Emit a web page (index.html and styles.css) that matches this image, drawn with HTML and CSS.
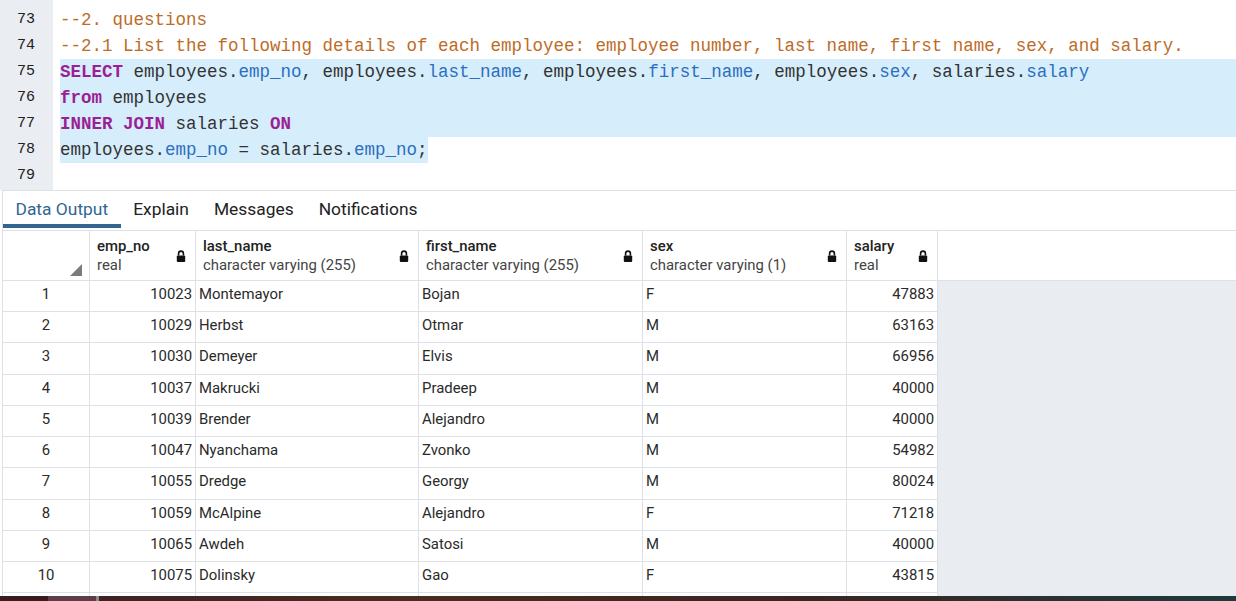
FILE: index.html
```html
<!DOCTYPE html>
<html>
<head>
<meta charset="utf-8">
<link rel="stylesheet" href="styles.css">
</head>
<body>
<div class="page">
  <div class="editor">
    <div class="gutter">
      <div class="ln">73</div><div class="ln">74</div><div class="ln">75</div><div class="ln">76</div><div class="ln">77</div><div class="ln">78</div><div class="ln">79</div>
    </div>
    <div class="code">
      <div class="line"><span class="cm">--2. questions</span></div>
      <div class="line"><span class="cm">--2.1 List the following details of each employee: employee number, last name, first name, sex, and salary.</span></div>
      <div class="line sel"><span class="kw">SELECT</span> employees.<span class="pr">emp_no</span>, employees.<span class="pr">last_name</span>, employees.<span class="pr">first_name</span>, employees.<span class="pr">sex</span>, salaries.<span class="pr">salary</span></div>
      <div class="line sel"><span class="kw">from</span> employees</div>
      <div class="line sel"><span class="kw">INNER JOIN</span> salaries <span class="kw">ON</span></div>
      <div class="line"><span class="selpart">employees.<span class="pr">emp_no</span> = salaries.<span class="pr">emp_no</span>;</span></div>
      <div class="line"></div>
    </div>
  </div>
  <div class="panel">
    <div class="tabs">
      <div class="tab active">Data Output</div>
      <div class="tab">Explain</div>
      <div class="tab">Messages</div>
      <div class="tab">Notifications</div>
    </div>
    <div class="grid">
      <div class="row head">
        <div class="cell rn"><span class="corner"></span></div>
        <div class="cell hc"><div class="ht"><div class="hn">emp_no</div><div class="hy">real</div></div><svg class="lock" width="10" height="12" viewBox="0 0 10 12"><path d="M2.6 5.5V3.5a2.4 2.4 0 0 1 4.8 0V5.5" fill="none" stroke="#111" stroke-width="1.6"/><rect x="0.8" y="5.5" width="8.4" height="6.5" rx="1" fill="#111"/></svg></div>
        <div class="cell hc"><div class="ht"><div class="hn">last_name</div><div class="hy">character varying (255)</div></div><svg class="lock" width="10" height="12" viewBox="0 0 10 12"><path d="M2.6 5.5V3.5a2.4 2.4 0 0 1 4.8 0V5.5" fill="none" stroke="#111" stroke-width="1.6"/><rect x="0.8" y="5.5" width="8.4" height="6.5" rx="1" fill="#111"/></svg></div>
        <div class="cell hc"><div class="ht"><div class="hn">first_name</div><div class="hy">character varying (255)</div></div><svg class="lock" width="10" height="12" viewBox="0 0 10 12"><path d="M2.6 5.5V3.5a2.4 2.4 0 0 1 4.8 0V5.5" fill="none" stroke="#111" stroke-width="1.6"/><rect x="0.8" y="5.5" width="8.4" height="6.5" rx="1" fill="#111"/></svg></div>
        <div class="cell hc"><div class="ht"><div class="hn">sex</div><div class="hy">character varying (1)</div></div><svg class="lock" width="10" height="12" viewBox="0 0 10 12"><path d="M2.6 5.5V3.5a2.4 2.4 0 0 1 4.8 0V5.5" fill="none" stroke="#111" stroke-width="1.6"/><rect x="0.8" y="5.5" width="8.4" height="6.5" rx="1" fill="#111"/></svg></div>
        <div class="cell hc"><div class="ht"><div class="hn">salary</div><div class="hy">real</div></div><svg class="lock" width="10" height="12" viewBox="0 0 10 12"><path d="M2.6 5.5V3.5a2.4 2.4 0 0 1 4.8 0V5.5" fill="none" stroke="#111" stroke-width="1.6"/><rect x="0.8" y="5.5" width="8.4" height="6.5" rx="1" fill="#111"/></svg></div>
        <div class="fill"></div>
      </div>
      <div class="row"><div class="cell rn">1</div><div class="cell num">10023</div><div class="cell">Montemayor</div><div class="cell">Bojan</div><div class="cell">F</div><div class="cell num">47883</div><div class="gray"></div></div>
      <div class="row"><div class="cell rn">2</div><div class="cell num">10029</div><div class="cell">Herbst</div><div class="cell">Otmar</div><div class="cell">M</div><div class="cell num">63163</div><div class="gray"></div></div>
      <div class="row"><div class="cell rn">3</div><div class="cell num">10030</div><div class="cell">Demeyer</div><div class="cell">Elvis</div><div class="cell">M</div><div class="cell num">66956</div><div class="gray"></div></div>
      <div class="row"><div class="cell rn">4</div><div class="cell num">10037</div><div class="cell">Makrucki</div><div class="cell">Pradeep</div><div class="cell">M</div><div class="cell num">40000</div><div class="gray"></div></div>
      <div class="row"><div class="cell rn">5</div><div class="cell num">10039</div><div class="cell">Brender</div><div class="cell">Alejandro</div><div class="cell">M</div><div class="cell num">40000</div><div class="gray"></div></div>
      <div class="row"><div class="cell rn">6</div><div class="cell num">10047</div><div class="cell">Nyanchama</div><div class="cell">Zvonko</div><div class="cell">M</div><div class="cell num">54982</div><div class="gray"></div></div>
      <div class="row"><div class="cell rn">7</div><div class="cell num">10055</div><div class="cell">Dredge</div><div class="cell">Georgy</div><div class="cell">M</div><div class="cell num">80024</div><div class="gray"></div></div>
      <div class="row"><div class="cell rn">8</div><div class="cell num">10059</div><div class="cell">McAlpine</div><div class="cell">Alejandro</div><div class="cell">F</div><div class="cell num">71218</div><div class="gray"></div></div>
      <div class="row"><div class="cell rn">9</div><div class="cell num">10065</div><div class="cell">Awdeh</div><div class="cell">Satosi</div><div class="cell">M</div><div class="cell num">40000</div><div class="gray"></div></div>
      <div class="row"><div class="cell rn">10</div><div class="cell num">10075</div><div class="cell">Dolinsky</div><div class="cell">Gao</div><div class="cell">F</div><div class="cell num">43815</div><div class="gray"></div></div>
      <div class="row"><div class="cell rn"></div><div class="cell num"></div><div class="cell"></div><div class="cell"></div><div class="cell"></div><div class="cell num"></div><div class="gray"></div></div>
    </div>
  </div>
  <div class="taskbar"></div>
</div>
</body>
</html>
```
FILE: styles.css
```css
* { box-sizing: border-box; }
html, body { margin: 0; padding: 0; background: #fff; }
.page {
  width: 1236px;
  height: 601px;
  display: flex;
  flex-direction: column;
  overflow: hidden;
  font-family: Roboto, "Liberation Sans", sans-serif;
  color: #222;
}
.editor {
  height: 190px;
  flex: none;
  display: flex;
}
.gutter {
  width: 53px;
  flex: none;
  background: #eaedf2;
  padding-top: 7px;
}
.ln {
  height: 26px;
  line-height: 26px;
  text-align: right;
  padding-right: 18px;
  font-family: "Liberation Mono", monospace;
  font-size: 15px;
  color: #222;
}
.code {
  flex: 1;
  padding-top: 7px;
  padding-left: 7px;
  font-family: "Liberation Mono", monospace;
  font-size: 17.5px;
  color: #333;
}
.line {
  height: 26px;
  line-height: 26px;
  white-space: pre;
}
.sel { background: #d6edfb; }
.selpart {
  display: inline-block;
  height: 26px;
  background: #d6edfb;
}
.cm { color: #bd6c28; }
.kw { color: #9b1f95; font-weight: bold; }
.pr { color: #2c6fc0; }

.panel {
  flex: 1;
  min-height: 0;
  overflow: hidden;
  margin-left: 2px;
  border-left: 1px solid #dde1e7;
  display: flex;
  flex-direction: column;
}
.tabs {
  flex: none;
  height: 40px;
  border-top: 1px solid #dde1e7;
  display: flex;
  align-items: flex-start;
}
.tab {
  padding: 3px 12.5px 0;
  height: 37px;
  line-height: 30px;
  font-size: 17.4px;
  color: #222;
  border-bottom: 4px solid transparent;
}
.tab.active {
  color: #326690;
  border-bottom-color: #326690;
}
.grid {
  flex: 1;
  border-top: 1px solid #dde1e7;
}
.row {
  display: grid;
  grid-template-columns: 87px 106px 223px 224px 204px 91px 1fr;
  height: 31.22px;
}
.row.head { height: 50px; }
.cell {
  border-right: 1px solid #dde1e7;
  border-bottom: 1px solid #dde1e7;
  font-size: 14.9px;
  line-height: 25px;
  padding: 1px 3px 0;
  white-space: nowrap;
  overflow: hidden;
  color: #2a2a2a;
}
.cell.num { text-align: right; }
.cell.rn { text-align: center; position: relative; }
.head .cell { padding: 0 0 0 7px; display: flex; align-items: center; }
.hc { justify-content: space-between; padding-right: 9px !important; }
.ht { line-height: 19px; }
.hn { font-weight: 500; color: #222; }
.hy { color: #444; }
.lock { flex: none; }
.corner {
  position: absolute;
  right: 7px;
  bottom: 4px;
  width: 0;
  height: 0;
  border-left: 12px solid transparent;
  border-bottom: 12px solid #7b7b7b;
}
.fill { border-bottom: 1px solid #dde1e7; }
.gray { background: #e9ecf1; }
.taskbar {
  flex: none;
  height: 5px;
  background: linear-gradient(90deg, #3c1b20 0px, #3c1b20 48px, #5e3c4a 48px, #5e3c4a 96px, #8a8a8a 96px, #8a8a8a 99px, #3e2322 99px, #4a2c22 400px, #3a2620 800px, #1e3a3c 1236px);
}
```
